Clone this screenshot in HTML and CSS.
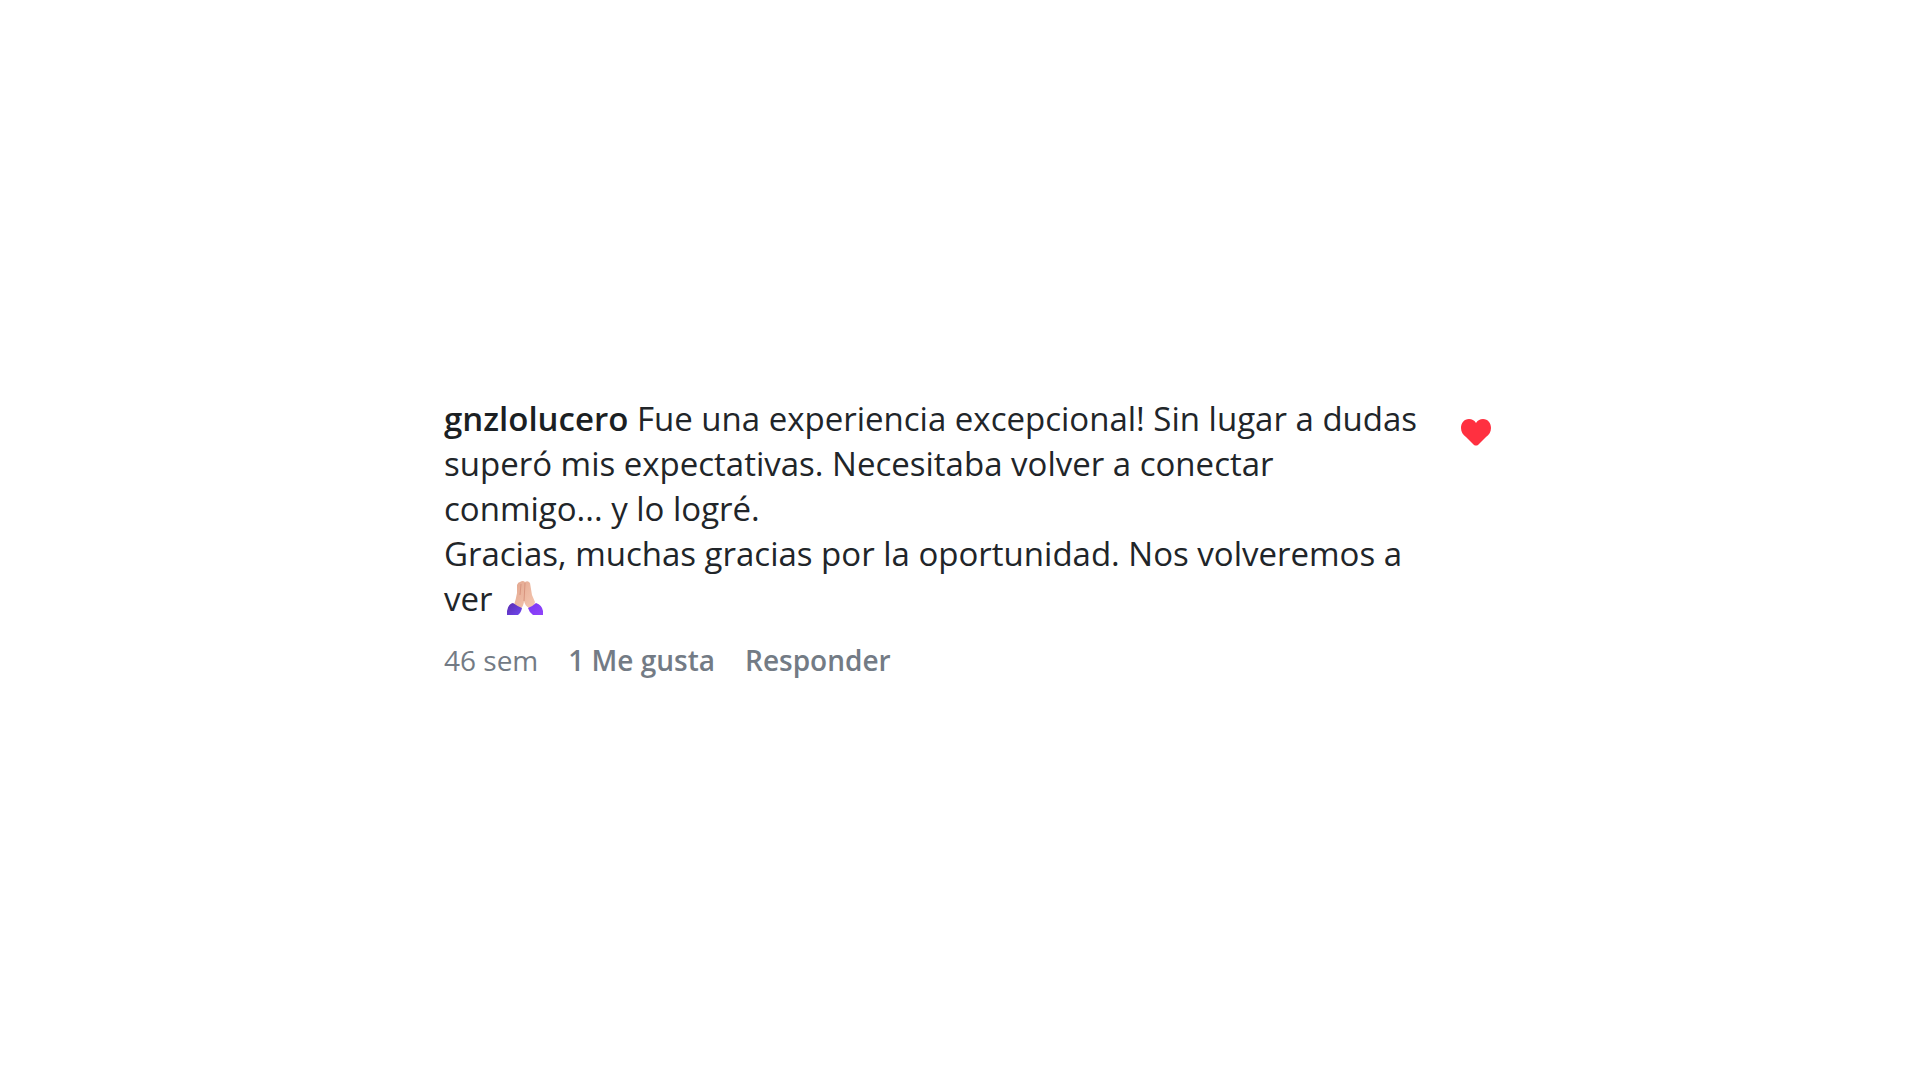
FILE: index.html
```
<!DOCTYPE html>
<html lang="es">
<head>
    <meta charset="UTF-8">
    <meta name="viewport" content="width=device-width, initial-scale=1.0">
    <title>Comentario</title>
    <link rel="stylesheet" href="styles.css">
</head>

<body>
    <main class="page">
        <article class="comment">
            <div class="comment-body">
                <p class="comment-text"><a href="#" class="username">gnzlolucero</a> Fue una experiencia excepcional! Sin lugar a dudas superó mis expectativas. Necesitaba volver a conectar conmigo... y lo logré.<br>
                Gracias, muchas gracias por la oportunidad. Nos volveremos a ver
                <svg class="emoji" viewBox="0 0 36 34" role="img" aria-label="Manos juntas">
                    <defs>
                        <linearGradient id="skin" x1="0" y1="0" x2="1" y2="1">
                            <stop offset="0" stop-color="#e2a68e"/>
                            <stop offset="1" stop-color="#f6c9b3"/>
                        </linearGradient>
                        <linearGradient id="sleeveLeft" x1="0" y1="0" x2="1" y2="1">
                            <stop offset="0" stop-color="#5a2cae"/>
                            <stop offset="1" stop-color="#7048f0"/>
                        </linearGradient>
                        <linearGradient id="sleeveRight" x1="0" y1="0" x2="1" y2="1">
                            <stop offset="0" stop-color="#7a35f5"/>
                            <stop offset="1" stop-color="#9145fa"/>
                        </linearGradient>
                    </defs>
                    <path fill="url(#skin)" d="M13 1Q16-1 18 1Q21-1 23 2L25 14L28 21Q28 24 25 26L22 27Q18 25 17 20Q17 25 13 28L7 24Q9 18 10 12L10 4Q11 1 13 1Z"/>
                    <path fill="none" stroke="#d8957f" stroke-width="1" d="M18 2L17 20M14 3L13 14"/>
                    <path fill="url(#sleeveLeft)" d="M6 22Q10 25 15 27Q14 32 11 34H0V30Q1 23 6 22Z"/>
                    <path fill="url(#sleeveRight)" d="M29 22Q26 25 21 27Q22 31 26 34H36V30Q35 24 29 22Z"/>
                </svg></p>
                <div class="comment-meta">
                    <time>46 sem</time>
                    <button type="button">1 Me gusta</button>
                    <button type="button">Responder</button>
                </div>
            </div>
            <button type="button" class="like" aria-label="Ya no me gusta">
                <svg viewBox="0 0 32 28" aria-hidden="true">
                    <path fill="#ff3040" d="M16 5C18 2 20 1 23 1C28 1 31 5 31 10C31 14 29 17 26 19L18 27Q16 28 14 27L6 19C3 17 1 14 1 10C1 5 4 1 9 1C12 1 14 2 16 5Z"/>
                </svg>
            </button>
        </article>
    </main>
</body>

</html>
```

FILE: styles.css
```
/* General styles */
body {
    font-family: "Segoe UI", "Open Sans", "Noto Sans", sans-serif;
    margin: 0;
    background-color: #fff;
    color: #212529;
}

button {
    padding: 0;
    border: none;
    background: none;
    color: inherit;
    font: inherit;
    cursor: pointer;
}

.page {
    min-height: 100vh;
    display: flex;
    align-items: center;
    justify-content: center;
}

/* Comment */
.comment {
    display: flex;
    align-items: flex-start;
    max-width: 1048px;
    padding: 0 16px 6px 32px;
}

.comment-body {
    flex: 1;
}

.comment-text {
    margin: 0;
    font-size: 33px;
    line-height: 45px;
}

.username {
    color: #1b1f23;
    font-weight: 600;
    text-decoration: none;
}

.emoji {
    width: 36px;
    height: 34px;
    margin-left: 6px;
    vertical-align: -4px;
}

.comment-meta {
    display: flex;
    gap: 30px;
    margin-top: 21px;
    color: #737b85;
    font-size: 28px;
    line-height: 36px;
}

.comment-meta button {
    font-weight: 600;
}

/* Like button */
.like {
    margin: 22px 0 0 32px;
}

.like svg {
    display: block;
    width: 32px;
    height: 28px;
}
```
